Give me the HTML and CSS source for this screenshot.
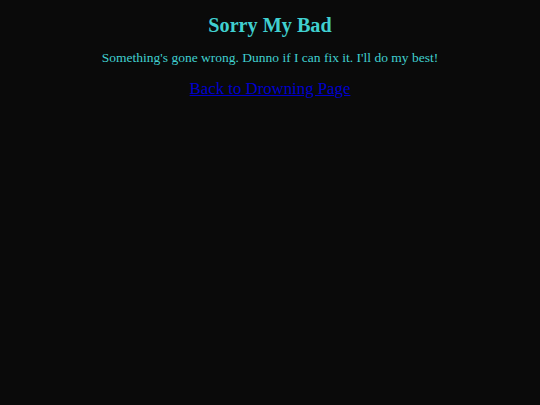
FILE: index.html
```html
<!DOCTYPE html>
<html>
<head>
<meta charset="utf-8">
<link rel="stylesheet" href="styles.css">
</head>
<body>
<main class="page">
  <h1 class="title">Sorry My Bad</h1>
  <p class="message">Something's gone wrong. Dunno if I can fix it. I'll do my best!</p>
  <a class="back" href="#">Back to Drowning Page</a>
</main>
</body>
</html>
```
FILE: styles.css
```css
html, body {
  margin: 0;
  padding: 0;
  background: #0a0a0a;
  height: 100%;
}
.page {
  display: flex;
  flex-direction: column;
  align-items: center;
  padding-top: 12px;
  font-family: "Liberation Serif", "Times New Roman", serif;
  color: #40d0d0;
  text-align: center;
}
.title {
  margin: 0;
  font-size: 20.2px;
  font-weight: bold;
  line-height: 26px;
}
.message {
  margin: 10px 0 0;
  font-size: 13.5px;
  line-height: 20px;
}
.back {
  margin-top: 10px;
  font-size: 16.8px;
  line-height: 22px;
  color: #0000cc;
}
```
